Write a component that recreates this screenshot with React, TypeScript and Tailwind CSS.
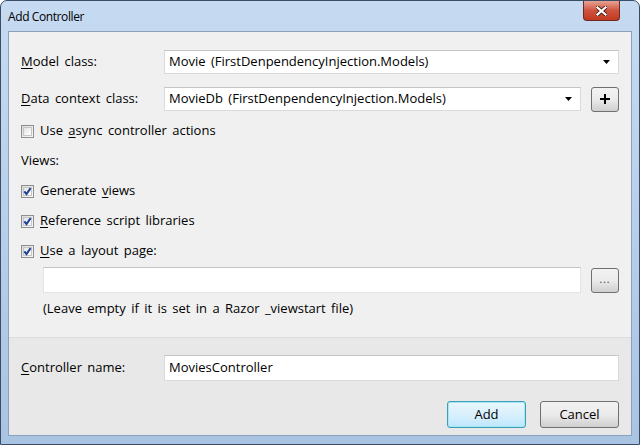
import React from "react";

const font = { fontFamily: '"Open Sans", "Noto Sans CJK JP", sans-serif' };

function U({ children }: { children: React.ReactNode }) {
  return <span className="underline underline-offset-2 decoration-1">{children}</span>;
}

function Check({ checked }: { checked: boolean }) {
  return (
    <div className="w-[13px] h-[13px] border border-[#8e8f8f] bg-gradient-to-br from-[#dcdcdc] to-[#fbfbfb] flex items-center justify-center shrink-0">
      <div className="w-[9px] h-[9px] border border-[#c6c6c6] bg-gradient-to-br from-[#e3e3e3] to-[#ffffff] flex items-center justify-center">
        {checked && (
          <svg width="9" height="9" viewBox="0 0 9 9" className="overflow-visible">
            <path d="M1.3 4.3 L3.5 7 L7.6 1.2" stroke="#21409a" strokeWidth="2" fill="none" />
          </svg>
        )}
      </div>
    </div>
  );
}

function Arrow() {
  return (
    <svg width="7" height="4" viewBox="0 0 7 4">
      <path d="M0 0 H7 L3.5 4 Z" fill="#000" />
    </svg>
  );
}

function SmallBtn({ children }: { children: React.ReactNode }) {
  return (
    <div className="w-[28px] h-[25px] rounded-[3px] border border-[#707070] bg-gradient-to-b from-[#f2f2f2] via-[#ebebeb] to-[#cfcfcf] flex items-center justify-center shrink-0">
      {children}
    </div>
  );
}

export default function App() {
  return (
    <div
      className="w-[640px] h-[445px] relative overflow-hidden rounded-t-[7px] border border-[#3b4d66] bg-gradient-to-b from-[#c6dbf1] via-[#b8cfea] to-[#a9c3e2] text-[13px] text-black flex flex-col [word-spacing:2px]"
      style={font}
    >
      {/* title bar */}
      <div className="h-[30px] shrink-0 flex items-center pl-[7px] pt-[1px] text-[12px] tracking-[-0.4px] [word-spacing:0px] text-black">
        Add Controller
      </div>
      <div className="absolute top-0 right-[19px] w-[37px] h-[20px] rounded-b-[4px] border border-t-0 border-[#6b2a22] bg-gradient-to-b from-[#e5a293] via-[#d0533f] to-[#c1391f] flex items-center justify-center">
        <svg width="11" height="10" viewBox="0 0 11 10">
          <path d="M1.5 1.5 L9.5 8.5 M9.5 1.5 L1.5 8.5" stroke="#4a1a12" strokeWidth="4" strokeLinecap="square" />
          <path d="M1.5 1.5 L9.5 8.5 M9.5 1.5 L1.5 8.5" stroke="#fff" strokeWidth="2.2" strokeLinecap="square" />
        </svg>
      </div>

      {/* client */}
      <div className="mx-[7px] mb-[8px] flex-1 border border-[#8aa0bd] flex flex-col bg-[#f0f0f0]">
        <div className="flex flex-col px-[12px] pt-[18px] h-[305px] shrink-0">
          <div className="flex items-center h-[24px]">
            <div className="w-[143px] shrink-0">
              <U>M</U>odel class:
            </div>
            <div className="flex-1 h-[24px] bg-white border border-[#dadada] border-t-[#c5c5c5] flex items-center pl-[4px] pr-[8px]">
              <span className="flex-1">Movie (FirstDenpendencyInjection.Models)</span>
              <Arrow />
            </div>
          </div>
          <div className="flex items-center h-[24px] mt-[13px]">
            <div className="w-[143px] shrink-0">
              <U>D</U>ata context class:
            </div>
            <div className="flex-1 h-[24px] bg-white border border-[#dadada] border-t-[#c5c5c5] flex items-center pl-[4px] pr-[8px]">
              <span className="flex-1">MovieDb (FirstDenpendencyInjection.Models)</span>
              <Arrow />
            </div>
            <div className="ml-[10px]">
              <SmallBtn>
                <svg width="12" height="12" viewBox="0 0 12 12">
                  <path d="M6 1 V11 M1 6 H11" stroke="#000" strokeWidth="2" />
                </svg>
              </SmallBtn>
            </div>
          </div>
          <div className="flex items-center gap-[6px] h-[20px] mt-[10px]">
            <Check checked={false} />
            <span>
              Use <U>a</U>sync controller actions
            </span>
          </div>
          <div className="flex items-center h-[20px] mt-[10px]">Views:</div>
          <div className="flex items-center gap-[6px] h-[20px] mt-[10px]">
            <Check checked />
            <span>
              Generate <U>v</U>iews
            </span>
          </div>
          <div className="flex items-center gap-[6px] h-[20px] mt-[10px]">
            <Check checked />
            <span>
              <U>R</U>eference script libraries
            </span>
          </div>
          <div className="flex items-center gap-[6px] h-[20px] mt-[10px]">
            <Check checked />
            <span>
              <U>U</U>se a layout page:
            </span>
          </div>
          <div className="flex items-center h-[26px] mt-[6px] pl-[22px]">
            <div className="flex-1 h-[26px] bg-white border border-[#e3e3e3] border-t-[#c5c5c5]" />
            <div className="ml-[10px]">
              <SmallBtn>
                <span className="text-[10px] leading-none tracking-[1px] text-[#333] -mt-[2px]">...</span>
              </SmallBtn>
            </div>
          </div>
          <div className="flex items-center h-[20px] mt-[6px] pl-[22px]">
            (Leave empty if it is set in a Razor _viewstart file)
          </div>
        </div>
        <div className="flex-1 bg-[#e8e8e8] border-t border-[#dcdcdc] flex flex-col px-[12px] pt-[17px]">
          <div className="flex items-center h-[26px]">
            <div className="w-[143px] shrink-0">
              <U>C</U>ontroller name:
            </div>
            <div className="flex-1 h-[26px] bg-white border border-[#dadada] border-t-[#c5c5c5] flex items-center pl-[4px]">
              MoviesController
            </div>
          </div>
          <div className="flex justify-end gap-[14px] mt-[20px]">
            <div className="w-[79px] h-[27px] rounded-[3px] border border-[#3c9fb5] bg-gradient-to-b from-[#eaf6fd] via-[#d9f0fc] to-[#bee6fd] shadow-[inset_0_0_0_1px_#a6e6f5] flex items-center justify-center">
              Add
            </div>
            <div className="w-[79px] h-[27px] rounded-[3px] border border-[#707070] bg-gradient-to-b from-[#f2f2f2] via-[#ebebeb] to-[#cfcfcf] flex items-center justify-center">
              Cancel
            </div>
          </div>
        </div>
      </div>
    </div>
  );
}
